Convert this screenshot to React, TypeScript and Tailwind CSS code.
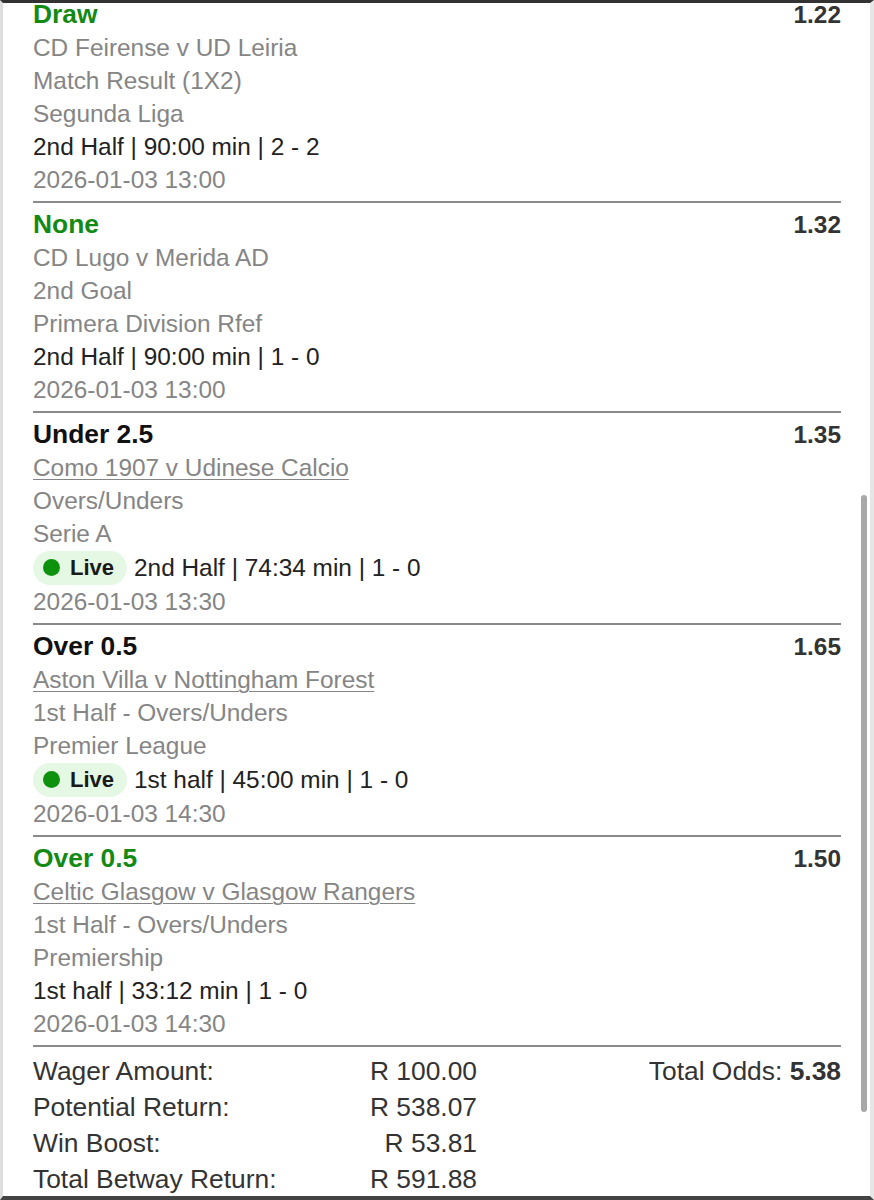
import React from 'react'

type Leg = {
  pick: string
  pickTone: 'green' | 'black'
  odds: string
  match: string
  linked?: boolean
  market: string
  league: string
  live?: boolean
  status: string
  date: string
}

const legs: Leg[] = [
  {
    pick: 'Draw',
    pickTone: 'green',
    odds: '1.22',
    match: 'CD Feirense v UD Leiria',
    market: 'Match Result (1X2)',
    league: 'Segunda Liga',
    status: '2nd Half | 90:00 min | 2 - 2',
    date: '2026-01-03 13:00',
  },
  {
    pick: 'None',
    pickTone: 'green',
    odds: '1.32',
    match: 'CD Lugo v Merida AD',
    market: '2nd Goal',
    league: 'Primera Division Rfef',
    status: '2nd Half | 90:00 min | 1 - 0',
    date: '2026-01-03 13:00',
  },
  {
    pick: 'Under 2.5',
    pickTone: 'black',
    odds: '1.35',
    match: 'Como 1907 v Udinese Calcio',
    linked: true,
    market: 'Overs/Unders',
    league: 'Serie A',
    live: true,
    status: '2nd Half | 74:34 min | 1 - 0',
    date: '2026-01-03 13:30',
  },
  {
    pick: 'Over 0.5',
    pickTone: 'black',
    odds: '1.65',
    match: 'Aston Villa v Nottingham Forest',
    linked: true,
    market: '1st Half - Overs/Unders',
    league: 'Premier League',
    live: true,
    status: '1st half | 45:00 min | 1 - 0',
    date: '2026-01-03 14:30',
  },
  {
    pick: 'Over 0.5',
    pickTone: 'green',
    odds: '1.50',
    match: 'Celtic Glasgow v Glasgow Rangers',
    linked: true,
    market: '1st Half - Overs/Unders',
    league: 'Premiership',
    status: '1st half | 33:12 min | 1 - 0',
    date: '2026-01-03 14:30',
  },
]

const summary = [
  { label: 'Wager Amount:', value: 'R 100.00' },
  { label: 'Potential Return:', value: 'R 538.07' },
  { label: 'Win Boost:', value: 'R 53.81' },
  { label: 'Total Betway Return:', value: 'R 591.88' },
]

function LegRow({ leg, first }: { leg: Leg; first: boolean }) {
  return (
    <div className={`pt-[5px] pb-[5px] border-b-2 border-[#8a8a8a] ${first ? '-mt-[10px]' : ''}`}>
      <div className="flex justify-between h-[33px]">
        <span
          className={`font-bold text-[26.4px] ${leg.pickTone === 'green' ? 'text-[#138a13]' : 'text-[#111111]'}`}
        >
          {leg.pick}
        </span>
        <span className="font-bold text-[#333333]">{leg.odds}</span>
      </div>
      <div className="h-[33px] text-[#858585]">
        <span className={leg.linked ? 'underline underline-offset-[3px] decoration-1' : ''}>{leg.match}</span>
      </div>
      <div className="h-[33px] text-[#858585]">{leg.market}</div>
      <div className="h-[33px] text-[#858585]">{leg.league}</div>
      {leg.live ? (
        <div className="h-[35px] flex items-center gap-[7px] text-[#222222]">
          <span className="h-[34px] flex items-center gap-[10px] pl-[10px] pr-[13px] rounded-full bg-[#e4f8e4]">
            <span className="w-[17px] h-[17px] rounded-full bg-[#0e920e]" />
            <span className="font-bold text-[22px] text-[#1a1a1a]">Live</span>
          </span>
          <span>{leg.status}</span>
        </div>
      ) : (
        <div className="h-[33px] text-[#222222]">{leg.status}</div>
      )}
      <div className="h-[33px] text-[#858585]">{leg.date}</div>
    </div>
  )
}

export default function App() {
  return (
    <div
      className="relative w-[874px] h-[1200px] overflow-hidden bg-white border-t-[3px] border-t-[#333333] border-b-4 border-b-[#444444] border-l-[3px] border-l-[#dedede] border-r-4 border-r-[#e6e6e6] text-[24.4px] leading-[33px]"
      style={{ fontFamily: '"Liberation Sans", Arial, Helvetica, sans-serif' }}
    >
      <div className="pl-[30px] pr-[29px]">
        {legs.map((leg, i) => (
          <LegRow key={i} leg={leg} first={i === 0} />
        ))}

        <div className="pt-[6px] flex justify-between text-[#333333] text-[26.4px] leading-[36px]">
          <div className="w-[444px] flex flex-col">
            {summary.map((row) => (
              <div key={row.label} className="flex justify-between">
                <span>{row.label}</span>
                <span>{row.value}</span>
              </div>
            ))}
          </div>
          <div>
            Total Odds: <span className="font-bold">5.38</span>
          </div>
        </div>
      </div>

      {/* scrollbar thumb */}
      <div className="absolute right-[3px] top-[492px] w-[6px] h-[617px] rounded-full bg-[#a8a8a8]" />
    </div>
  )
}
